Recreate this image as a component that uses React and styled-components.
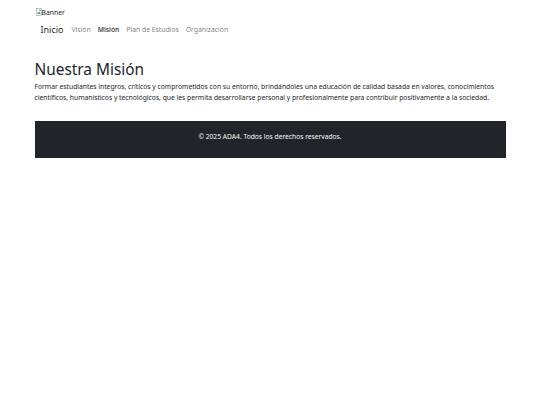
import React from "react";
import styled, { createGlobalStyle } from "styled-components";

const Global = createGlobalStyle`
  html, body { margin: 0; padding: 0; background: #fff; }
  body { font-family: "Noto Sans", "Open Sans", sans-serif; color: #212529; }
`;

const Page = styled.div`
  width: 471px;
  margin: 0 auto;
  padding-top: 7px;
`;

const BannerImg = styled.div`
  display: flex;
  align-items: center;
  height: 10px;
  margin-left: 1px;
  font-size: 6.8px;
  color: #212529;
`;

const Broken = styled.svg`
  width: 6px;
  height: 8px;
`;

const Nav = styled.nav`
  display: flex;
  align-items: center;
  padding: 5px 6px;
  height: 20px;
  box-sizing: border-box;
  margin-top: 2px;
`;

const Brand = styled.span`
  font-size: 9px;
  margin-right: 8px;
  color: rgba(0, 0, 0, 0.9);
`;

const NavLink = styled.span`
  font-size: 6.8px;
  margin-right: 7px;
  color: ${(p) => (p.$active ? "rgba(0,0,0,0.9)" : "rgba(0,0,0,0.55)")};
  font-weight: ${(p) => (p.$active ? 500 : 400)};
`;

const Main = styled.main`
  padding-top: 22px;
`;

const Title = styled.h2`
  margin: 0;
  font-size: 15.4px;
  font-weight: 400;
  line-height: 18px;
`;

const Text = styled.p`
  margin: 2px 0 0;
  font-size: 6.75px;
  line-height: 11px;
`;

const Footer = styled.footer`
  margin-top: 18px;
  height: 37px;
  box-sizing: border-box;
  padding-top: 10px;
  background: #212529;
  text-align: center;
  line-height: 11px;
  color: #f8f9fa;
  font-size: 6.7px;
`;

export default function App() {
  return (
    <>
      <Global />
      <Page>
        <BannerImg>
          <Broken viewBox="0 0 6 8">
            <rect x="0.5" y="0.5" width="5" height="7" fill="#fff" stroke="#999" strokeWidth="0.6" />
            <path d="M1 6 L3 3.5 L5 6 Z" fill="#4a9a3a" />
            <circle cx="4" cy="2.2" r="0.8" fill="#3a7bd5" />
          </Broken>
          Banner
        </BannerImg>
        <Nav>
          <Brand>Inicio</Brand>
          <NavLink>Visión</NavLink>
          <NavLink $active>Misión</NavLink>
          <NavLink>Plan de Estudios</NavLink>
          <NavLink>Organización</NavLink>
        </Nav>
        <Main>
          <Title>Nuestra Misión</Title>
          <Text>
            Formar estudiantes íntegros, críticos y comprometidos con su entorno, brindándoles una educación de calidad basada en valores, conocimientos científicos, humanísticos y tecnológicos, que les permita desarrollarse personal y profesionalmente para contribuir positivamente a la sociedad.
          </Text>
        </Main>
        <Footer>© 2025 ADA4. Todos los derechos reservados.</Footer>
      </Page>
    </>
  );
}
